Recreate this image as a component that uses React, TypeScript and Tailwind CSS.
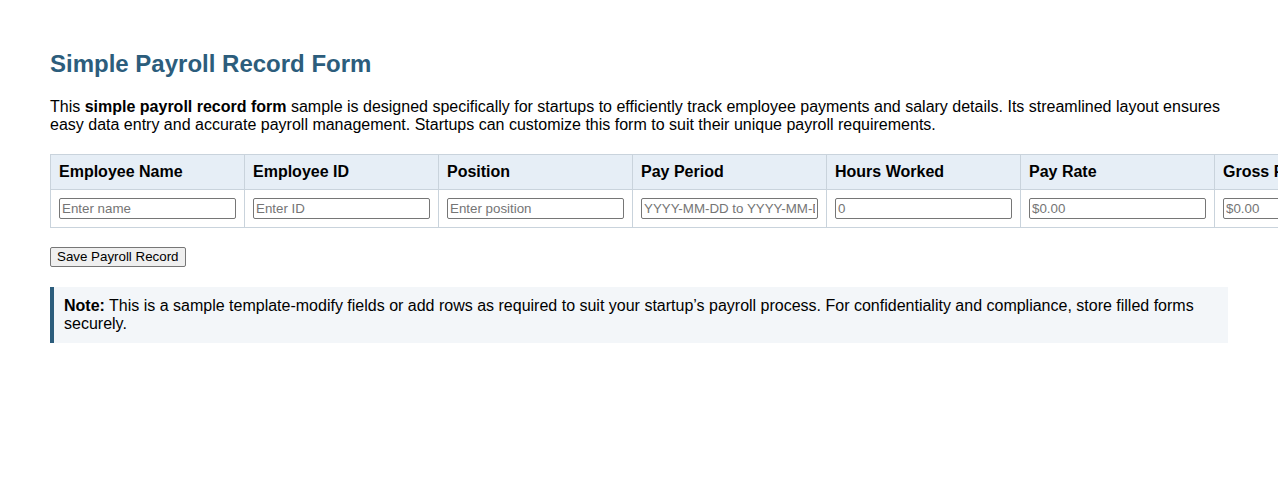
const columns = [
  { label: "Employee Name", placeholder: "Enter name" },
  { label: "Employee ID", placeholder: "Enter ID" },
  { label: "Position", placeholder: "Enter position" },
  { label: "Pay Period", placeholder: "YYYY-MM-DD to YYYY-MM-DD" },
  { label: "Hours Worked", placeholder: "0" },
  { label: "Pay Rate", placeholder: "$0.00" },
  { label: "Gross Pay", placeholder: "$0.00" },
  { label: "Deductions", placeholder: "$0.00" },
  { label: "Net Pay", placeholder: "$0.00" },
];

const App = () => {
  return (
    <div className="w-full min-h-[486px] overflow-hidden bg-white font-['Liberation_Sans',Arial,sans-serif] text-black">
      <div className="px-[50px] pt-[50px] pb-10">
        <h2 className="m-0 text-[24px] leading-[28px] font-bold text-[#2c5d7c]">
          Simple Payroll Record Form
        </h2>
        <p className="mt-[19.5px] text-[16px] leading-[18.4px]">
          This <strong className="font-bold">simple payroll record form</strong> sample is designed
          specifically for startups to efficiently track employee payments and salary details. Its
          streamlined layout ensures easy data entry and accurate payroll management. Startups can
          customize this form to suit their unique payroll requirements.
        </p>

        <form className="mt-[20px]" onSubmit={(e) => e.preventDefault()}>
          <table className="table-fixed w-[1747px] border-collapse">
            <thead>
              <tr>
                {columns.map((col) => (
                  <th
                    key={col.label}
                    className="border border-[#c9d3dc] bg-[#e6eef6] px-2 py-2 text-left text-[16px] leading-[18px] font-bold"
                  >
                    {col.label}
                  </th>
                ))}
              </tr>
            </thead>
            <tbody>
              <tr>
                {columns.map((col) => (
                  <td key={col.label} className="border border-[#c9d3dc] px-2 py-2">
                    <input
                      type="text"
                      placeholder={col.placeholder}
                      className="block h-[21px] w-full rounded-[2px] border border-[#767676] px-[2px] text-[13.33px] leading-[15px] placeholder:text-[#757575]"
                    />
                  </td>
                ))}
              </tr>
            </tbody>
          </table>

          <button
            type="submit"
            className="mt-[19px] block h-[20px] rounded-[2px] border border-[#767676] bg-[#efefef] px-[6px] text-[13.33px] leading-[16px]"
          >
            Save Payroll Record
          </button>
        </form>

        <div className="mt-[20px] border-l-4 border-[#2c5d7c] bg-[#f3f6f9] px-[10px] py-[10px] text-[16px] leading-[18px]">
          <strong className="font-bold">Note:</strong> This is a sample template-modify fields or add
          rows as required to suit your startup’s payroll process. For confidentiality and
          compliance, store filled forms securely.
        </div>
      </div>
    </div>
  );
};

export default App;
